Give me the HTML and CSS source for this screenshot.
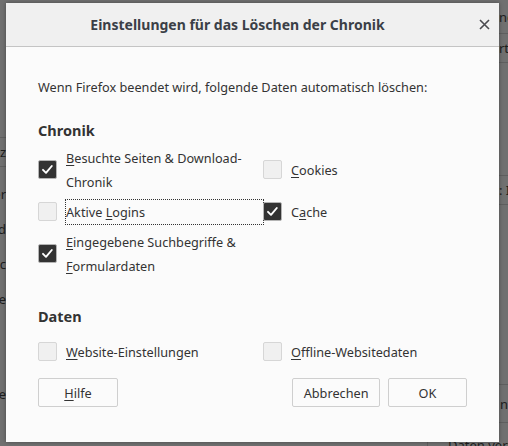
FILE: index.html
```html
<!DOCTYPE html>
<html lang="de">
<head>
<meta charset="utf-8">
<title>Einstellungen für das Löschen der Chronik</title>
<link rel="stylesheet" href="styles.css">
</head>
<body>
<div class="page">
  <div class="side side-left">
    <div class="bg-spacer bg-top-left"></div>
    <div class="bg-row bg-line bg-h28"><span>Schutz</span></div>
    <div class="bg-list">
      <div class="bg-row bg-h35"><span>Speicher</span></div>
      <div class="bg-row bg-h35"><span>Pfad</span></div>
      <div class="bg-row bg-h35"><span>Mac</span></div>
      <div class="bg-row bg-h35"><span>Weitere</span></div>
      <div class="bg-row bg-h35"></div>
      <div class="bg-row bg-h25"></div>
      <div class="bg-row bg-h35"><span>Service</span></div>
    </div>
  </div>
  <div class="side side-right">
    <div class="bg-row bg-line bg-h34 r-frag"><span>ngen</span></div>
    <div class="bg-row bg-line bg-h28 r-frag"><span>rt</span></div>
    <div class="bg-spacer bg-line bg-h112"></div>
    <div class="bg-row bg-line bg-h28 r-frag"><span>: Inhalte</span></div>
    <div class="bg-spacer bg-line bg-h179"></div>
    <div class="bg-box">
      <div class="bg-row bg-line bg-h38 r-frag"><span>nt</span></div>
      <div class="bg-row bg-last"><span>Daten <u>v</u>erwalten</span></div>
    </div>
  </div>
</div>

<div class="dialog" role="dialog">
  <div class="dlg-header">
    <div class="dlg-title">Einstellungen für das Löschen der Chronik</div>
    <button class="dlg-close" aria-label="Schließen">
      <svg width="11" height="11" viewBox="0 0 11 11"><path d="M1 1 L10 10 M10 1 L1 10" stroke="#4a4a4f" stroke-width="1.6" fill="none"/></svg>
    </button>
  </div>
  <div class="dlg-body">
    <p class="desc">Wenn Firefox beendet wird, folgende Daten automatisch löschen:</p>

    <h2 class="section-title">Chronik</h2>
    <div class="opts">
      <label class="opt">
        <span class="cb checked"><svg width="19" height="19" viewBox="0 0 19 19"><path d="M5 9.8 L8 12.8 L13.8 6" stroke="#fff" stroke-width="1.9" fill="none" stroke-linecap="round" stroke-linejoin="round"/></svg></span>
        <span class="opt-text"><u>B</u>esuchte Seiten &amp; Download-Chronik</span>
      </label>
      <label class="opt">
        <span class="cb"></span>
        <span class="opt-text"><u>C</u>ookies</span>
      </label>
      <label class="opt">
        <span class="cb"></span>
        <span class="opt-text focused">Aktive <u>L</u>ogins</span>
      </label>
      <label class="opt">
        <span class="cb checked"><svg width="19" height="19" viewBox="0 0 19 19"><path d="M5 9.8 L8 12.8 L13.8 6" stroke="#fff" stroke-width="1.9" fill="none" stroke-linecap="round" stroke-linejoin="round"/></svg></span>
        <span class="opt-text">C<u>a</u>che</span>
      </label>
      <label class="opt">
        <span class="cb checked"><svg width="19" height="19" viewBox="0 0 19 19"><path d="M5 9.8 L8 12.8 L13.8 6" stroke="#fff" stroke-width="1.9" fill="none" stroke-linecap="round" stroke-linejoin="round"/></svg></span>
        <span class="opt-text"><u>E</u>ingegebene Suchbegriffe &amp; <u>F</u>ormulardaten</span>
      </label>
    </div>

    <h2 class="section-title section-data">Daten</h2>
    <div class="opts opts-data">
      <label class="opt">
        <span class="cb"></span>
        <span class="opt-text"><u>W</u>ebsite-Einstellungen</span>
      </label>
      <label class="opt">
        <span class="cb"></span>
        <span class="opt-text"><u>O</u>ffline-Websitedaten</span>
      </label>
    </div>

    <div class="buttons">
      <button class="btn"><u>H</u>ilfe</button>
      <div class="btn-group">
        <button class="btn">Abbrechen</button>
        <button class="btn">OK</button>
      </div>
    </div>
  </div>
</div>
</body>
</html>
```

FILE: styles.css
```css
html, body {
  margin: 0;
  padding: 0;
}

body {
  width: 508px;
  height: 446px;
  overflow: hidden;
  position: relative;
  background: #707070;
  font-family: "Noto Sans", "Open Sans", sans-serif;
  font-size: 12.7px;
  color: #333;
}

/* ---------- backdrop (page behind the modal) ---------- */
.page {
  display: flex;
  justify-content: space-between;
  height: 446px;
}

.side {
  display: flex;
  flex-direction: column;
  overflow: hidden;
}

.side-left {
  width: 6px;
}

.side-right {
  width: 81px;
}

.bg-row {
  display: flex;
  align-items: center;
  white-space: nowrap;
  color: #1d1d1d;
  font-size: 13px;
  flex: none;
}

.side-left .bg-row {
  justify-content: flex-end;
}

.bg-line {
  border-bottom: 1px solid #5f5f5f;
}

.bg-spacer { flex: none; }
.bg-top-left { height: 137px; border-bottom: 1px solid #5f5f5f; }
.bg-list { padding-top: 9px; }
.bg-h25 { height: 25px; }
.bg-h28 { height: 28px; }
.bg-h34 { height: 33px; }
.bg-h35 { height: 35px; }
.bg-h38 { height: 37px; }
.bg-h112 { height: 112px; }
.bg-h179 { height: 179px; }

.r-frag {
  padding-left: 72px;
}

.bg-box {
  border-left: 1px solid #5f5f5f;
  flex: 1;
}

.bg-last {
  padding-left: 20px;
  padding-top: 13px;
}

/* ---------- dialog ---------- */
.dialog {
  position: absolute;
  left: 6px;
  top: 3px;
  width: 493px;
  height: 439px;
  background: #fbfbfb;
  box-shadow: 0 0 4px rgba(0, 0, 0, 0.35);
  display: flex;
  flex-direction: column;
}

.dlg-header {
  height: 43px;
  flex: none;
  background: #f0f0f0;
  border-bottom: 1px solid #c4c4c4;
  display: flex;
  align-items: center;
}

.dlg-title {
  flex: 1;
  text-align: center;
  font-size: 14px;
  font-weight: 700;
  color: #3b3f47;
}

.dlg-close {
  width: 30px;
  height: 30px;
  border: 0;
  background: transparent;
  padding: 0;
  display: flex;
  align-items: center;
  justify-content: center;
}

.dlg-body {
  flex: 1;
  padding: 28px 32px 0 32px;
  display: flex;
  flex-direction: column;
}

.desc {
  margin: 0;
  line-height: 24px;
}

.section-title {
  margin: 19px 0 0 0;
  font-size: 14.5px;
  font-weight: 700;
  line-height: 24px;
  color: #333;
}

.section-data {
  margin-top: 26px;
}

.opts {
  margin-top: 4px;
  display: grid;
  grid-template-columns: 225px 1fr;
  row-gap: 6px;
  align-items: center;
}

.opts-data {
  margin-top: 12px;
}

.opt {
  display: flex;
  align-items: center;
  gap: 9px;
}

.opt-text {
  flex: 1;
  line-height: 24px;
}

.opt-text.focused {
  outline: 1px dotted #333;
}

.opt-text u, .btn u, .bg-row u {
  text-underline-offset: 2px;
}

.cb {
  flex: none;
  width: 19px;
  height: 19px;
  box-sizing: border-box;
  border: 1px solid #d6d6d6;
  border-radius: 2px;
  background: #f0f0f0;
  display: flex;
  align-items: center;
  justify-content: center;
  margin-top: -2px;
}

.cb svg {
  display: block;
  margin: -1px;
}

.cb.checked {
  background: #333;
  border-color: #b4b4b4;
}

.buttons {
  margin-top: 14px;
  display: flex;
  justify-content: space-between;
}

.btn-group {
  display: flex;
  gap: 8px;
}

.btn {
  height: 29px;
  min-width: 79px;
  padding: 0 10.5px;
  box-sizing: border-box;
  border: 1px solid #cfcfcf;
  border-radius: 2px;
  background: #fbfbfb;
  font-family: inherit;
  font-size: 12.7px;
  color: #333;
}

.buttons > .btn {
  min-width: 80px;
}
```
